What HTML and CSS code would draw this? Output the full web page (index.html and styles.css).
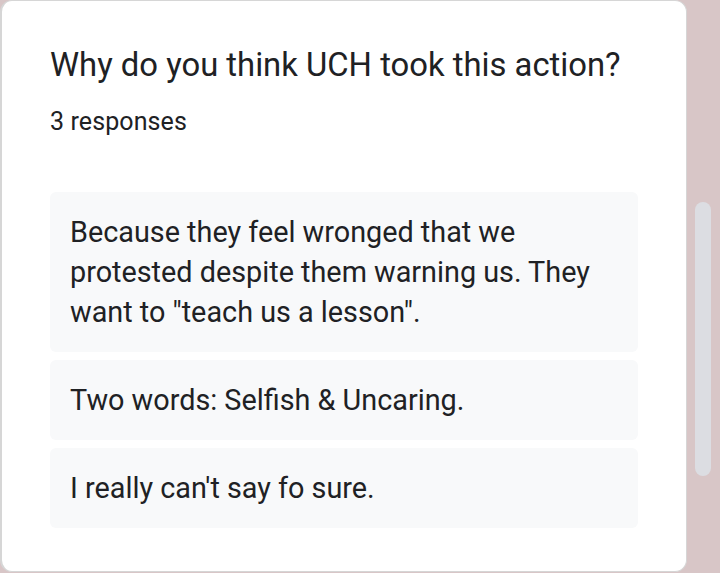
FILE: index.html
```html
<!DOCTYPE html>
<html>
<head>
<meta charset="utf-8">
<link rel="stylesheet" href="styles.css">
</head>
<body>
<div class="page">
  <div class="card">
    <h1 class="title">Why do you think UCH took this action?</h1>
    <div class="count">3 responses</div>
    <div class="list">
      <div class="resp">Because they feel wronged that we protested despite them warning us. They want to "teach us a lesson".</div>
      <div class="resp">Two words: Selfish &amp; Uncaring.</div>
      <div class="resp">I really can't say fo sure.</div>
    </div>
  </div>
  <div class="track"><div class="thumb"></div></div>
</div>
</body>
</html>
```
FILE: styles.css
```css
html, body {
  margin: 0;
  padding: 0;
  height: 100%;
}
body {
  background: #d8c6c7;
  font-family: Roboto, "Noto Sans", sans-serif;
  color: #202124;
  overflow: hidden;
}
.page {
  display: flex;
  height: 573px;
}
.card {
  box-sizing: border-box;
  width: 687px;
  height: 572px;
  background: #fff;
  border: 1px solid #d6d6d6;
  border-left-width: 2px;
  border-radius: 12px;
  padding: 44px 48px 0 48px;
}
.title {
  margin: 0;
  font-weight: 400;
  font-size: 32.8px;
  line-height: 40px;
}
.count {
  margin-top: 23px;
  font-size: 25px;
  line-height: 28px;
  letter-spacing: 0.1px;
}
.list {
  margin-top: 56px;
  display: flex;
  flex-direction: column;
  gap: 8px;
}
.resp {
  background: #f8f9fa;
  border-radius: 6px;
  padding: 20px 19px 20px 20px;
  font-size: 28.8px;
  line-height: 40px;
}
.track {
  flex: 1;
  padding-top: 202px;
  display: flex;
  justify-content: center;
  padding-right: 1px;
}
.thumb {
  width: 16px;
  height: 274px;
  border-radius: 8px;
  background: #dcdde2;
}
```
